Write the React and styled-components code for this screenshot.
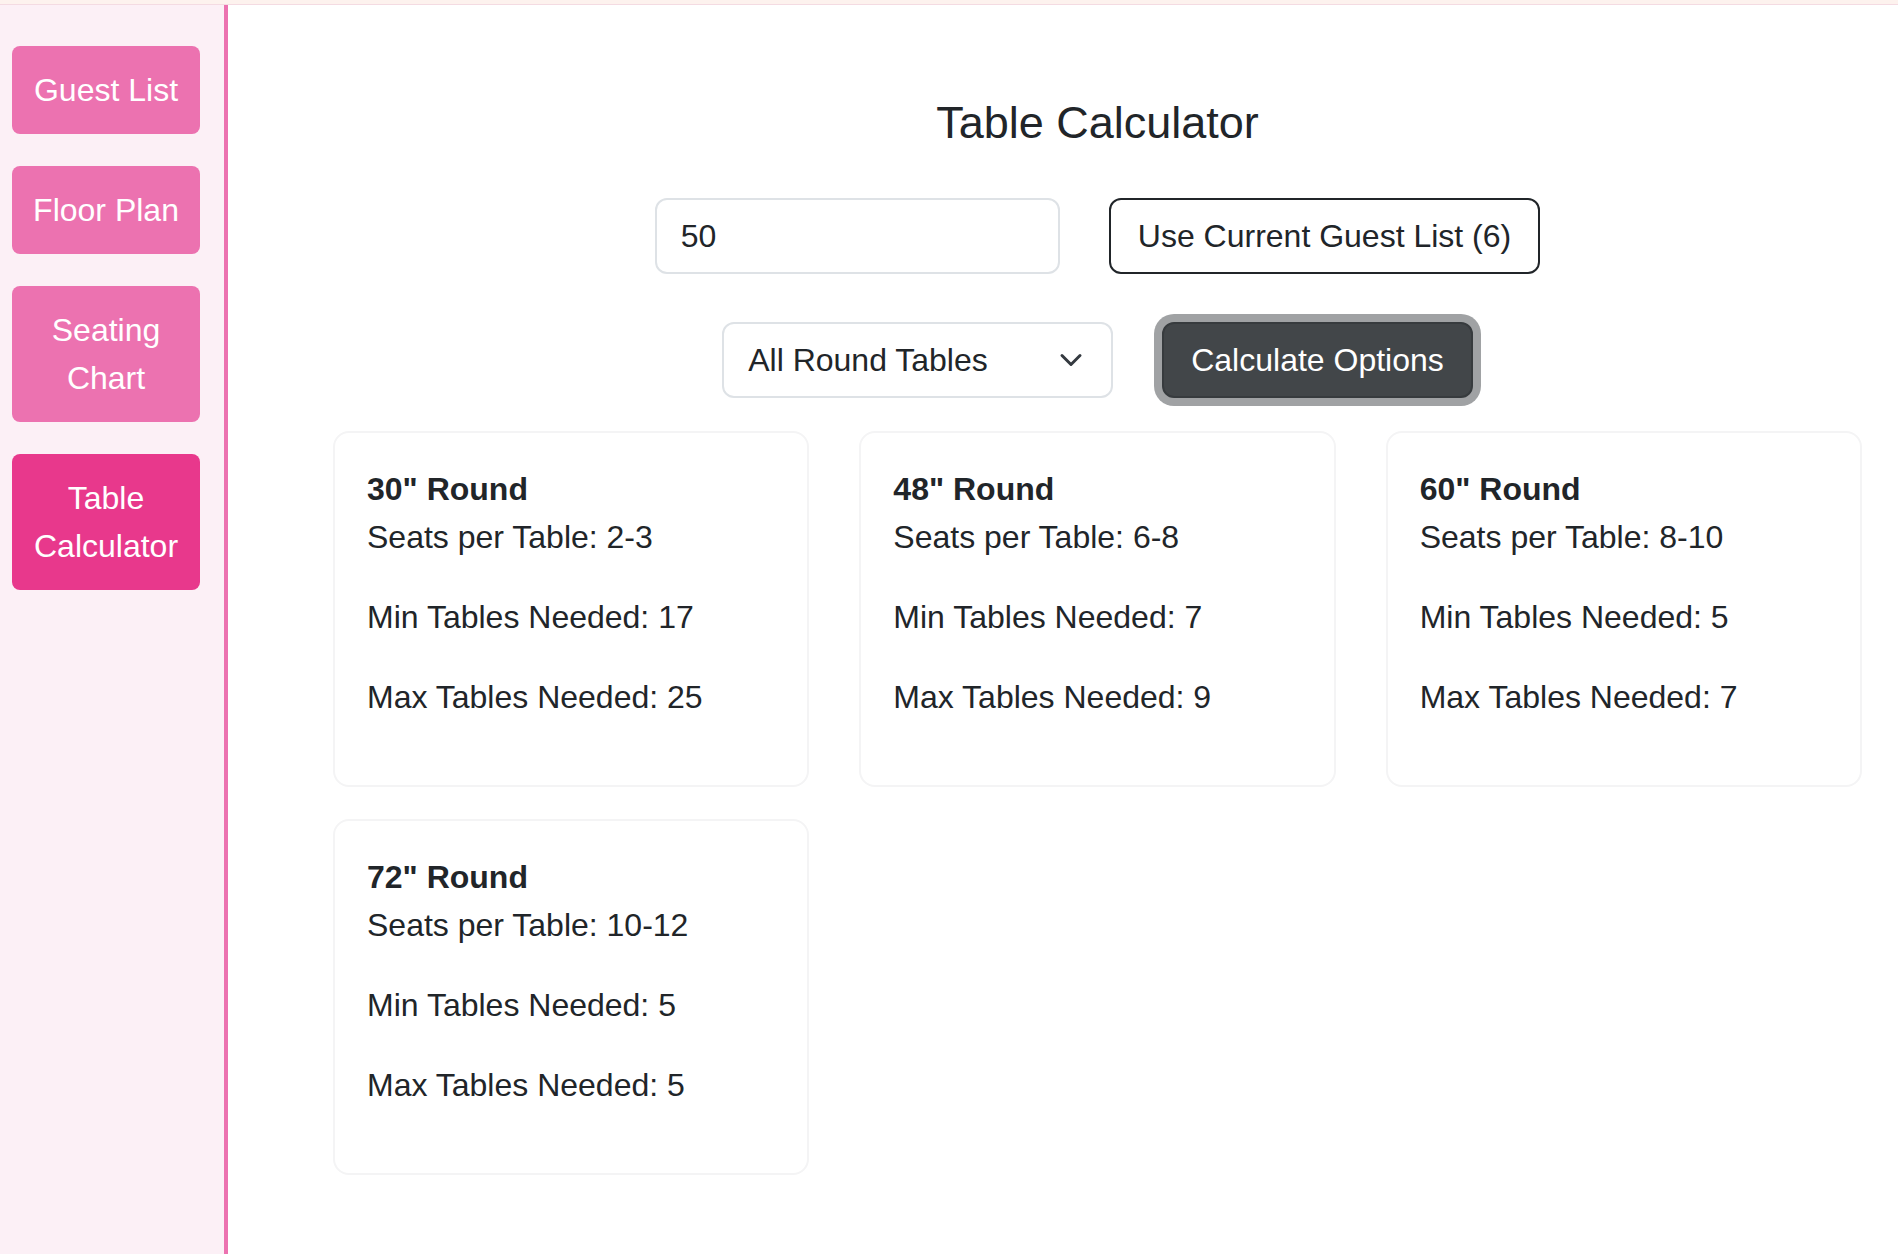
import React, { useState } from 'react';
import styled, { createGlobalStyle } from 'styled-components';

const GlobalStyle = createGlobalStyle`
  html, body {
    margin: 0;
    padding: 0;
    background: #ffffff;
  }
  body {
    font-family: "Liberation Sans", Arial, sans-serif;
    color: #212529;
  }
  * {
    box-sizing: border-box;
  }
`;

const NAV_ITEMS = ['Guest List', 'Floor Plan', 'Seating Chart', 'Table Calculator'];

// round table sizes and the seat range each one holds
const TABLE_SIZES = [
  { size: 30, minSeats: 2, maxSeats: 3 },
  { size: 48, minSeats: 6, maxSeats: 8 },
  { size: 60, minSeats: 8, maxSeats: 10 },
  { size: 72, minSeats: 10, maxSeats: 12 },
];

const App = () => {
  const [guestCount, setGuestCount] = useState('50');
  const [tableType, setTableType] = useState('round');
  const [active] = useState('Table Calculator');

  const guests = parseInt(guestCount, 10) || 0;
  const options = TABLE_SIZES.map((t) => ({
    ...t,
    minTables: Math.ceil(guests / t.maxSeats),
    maxTables: Math.ceil(guests / t.minSeats),
  }));

  return (
    <>
      <GlobalStyle />
      <Shell>
        <TopBar />
        <Body>
          <Sidebar>
            {NAV_ITEMS.map((item) => (
              <NavButton key={item} $active={item === active}>
                {item}
              </NavButton>
            ))}
          </Sidebar>

          <Main>
            <Title>Table Calculator</Title>

            <ControlRow>
              <GuestInput
                type="number"
                value={guestCount}
                onChange={(e) => setGuestCount(e.target.value)}
              />
              <OutlineButton onClick={() => setGuestCount('6')}>
                Use Current Guest List (6)
              </OutlineButton>
            </ControlRow>

            <ControlRow>
              <TypeSelect value={tableType} onChange={(e) => setTableType(e.target.value)}>
                <option value="round">All Round Tables</option>
                <option value="rect">All Rectangular Tables</option>
              </TypeSelect>
              <DarkButton>Calculate Options</DarkButton>
            </ControlRow>

            <CardGrid>
              {options.map((opt) => (
                <Card key={opt.size}>
                  <CardTitle>{opt.size}" Round</CardTitle>
                  <CardLine>Seats per Table: {opt.minSeats}-{opt.maxSeats}</CardLine>
                  <CardLine>Min Tables Needed: {opt.minTables}</CardLine>
                  <CardLine>Max Tables Needed: {opt.maxTables}</CardLine>
                </Card>
              ))}
            </CardGrid>
          </Main>
        </Body>
      </Shell>
    </>
  );
};

// Styled Components
const Shell = styled.div`
  min-height: 100vh;
  display: flex;
  flex-direction: column;
`;

const TopBar = styled.div`
  height: 5px;
  background: #fdf2ee;
  border-bottom: 1px solid #f4dbe2;
`;

const Body = styled.div`
  flex: 1;
  display: flex;
`;

const Sidebar = styled.nav`
  width: 228px;
  flex-shrink: 0;
  background: #fcf0f6;
  border-right: 4px solid #ec72b0;
  padding: 41px 24px 0 12px;
  display: flex;
  flex-direction: column;
  gap: 32px;
`;

const NavButton = styled.button`
  width: 188px;
  padding: 20px 16px;
  border: none;
  border-radius: 8px;
  background: ${(p) => (p.$active ? '#e8388c' : '#ec72b0')};
  color: #ffffff;
  font-family: inherit;
  font-size: 32px;
  line-height: 48px;
  text-align: center;
  cursor: pointer;
`;

const Main = styled.main`
  flex: 1;
  padding: 91px 36px 60px 105px;
`;

const Title = styled.h2`
  margin: 0 0 48px;
  font-size: 45px;
  line-height: 54px;
  font-weight: 500;
  text-align: center;
  color: #212529;
`;

const ControlRow = styled.div`
  display: flex;
  justify-content: center;
  gap: 49px;
  margin-bottom: 48px;

  & + & {
    margin-bottom: 33px;
  }
`;

const fieldBase = `
  height: 76px;
  padding: 12px 24px;
  border-radius: 12px;
  font-family: inherit;
  font-size: 32px;
  line-height: 48px;
  color: #212529;
  background-color: #ffffff;
`;

const GuestInput = styled.input`
  ${fieldBase}
  width: 405px;
  border: 2px solid #dee2e6;
  outline: none;
  -moz-appearance: textfield;

  &::-webkit-outer-spin-button,
  &::-webkit-inner-spin-button {
    -webkit-appearance: none;
    margin: 0;
  }
`;

const TypeSelect = styled.select`
  ${fieldBase}
  width: 391px;
  border: 2px solid #dee2e6;
  appearance: none;
  -webkit-appearance: none;
  padding-right: 72px;
  background-image: url("data:image/svg+xml,%3csvg xmlns='http://www.w3.org/2000/svg' viewBox='0 0 16 16'%3e%3cpath fill='none' stroke='%23343a40' stroke-linecap='round' stroke-linejoin='round' stroke-width='2' d='m2 5 6 6 6-6'/%3e%3c/svg%3e");
  background-repeat: no-repeat;
  background-position: right 24px center;
  background-size: 32px 24px;
  outline: none;
`;

const OutlineButton = styled.button`
  ${fieldBase}
  padding: 12px 27px;
  border: 2px solid #212529;
  cursor: pointer;
`;

const DarkButton = styled.button`
  ${fieldBase}
  padding: 12px 27px;
  background-color: #424649;
  border: 2px solid #373b3e;
  color: #ffffff;
  box-shadow: 0 0 0 8px rgba(66, 70, 73, 0.5);
  cursor: pointer;
`;

const CardGrid = styled.div`
  display: grid;
  grid-template-columns: repeat(3, 1fr);
  column-gap: 50px;
  row-gap: 32px;
`;

const Card = styled.div`
  background: #ffffff;
  border: 2px solid #f4f4f5;
  border-radius: 16px;
  padding: 32px;
`;

const CardTitle = styled.h5`
  margin: 0;
  font-size: 32px;
  line-height: 48px;
  font-weight: 700;
  color: #212529;
`;

const CardLine = styled.p`
  margin: 0 0 32px;
  font-size: 32px;
  line-height: 48px;
  color: #212529;
`;

export default App;
